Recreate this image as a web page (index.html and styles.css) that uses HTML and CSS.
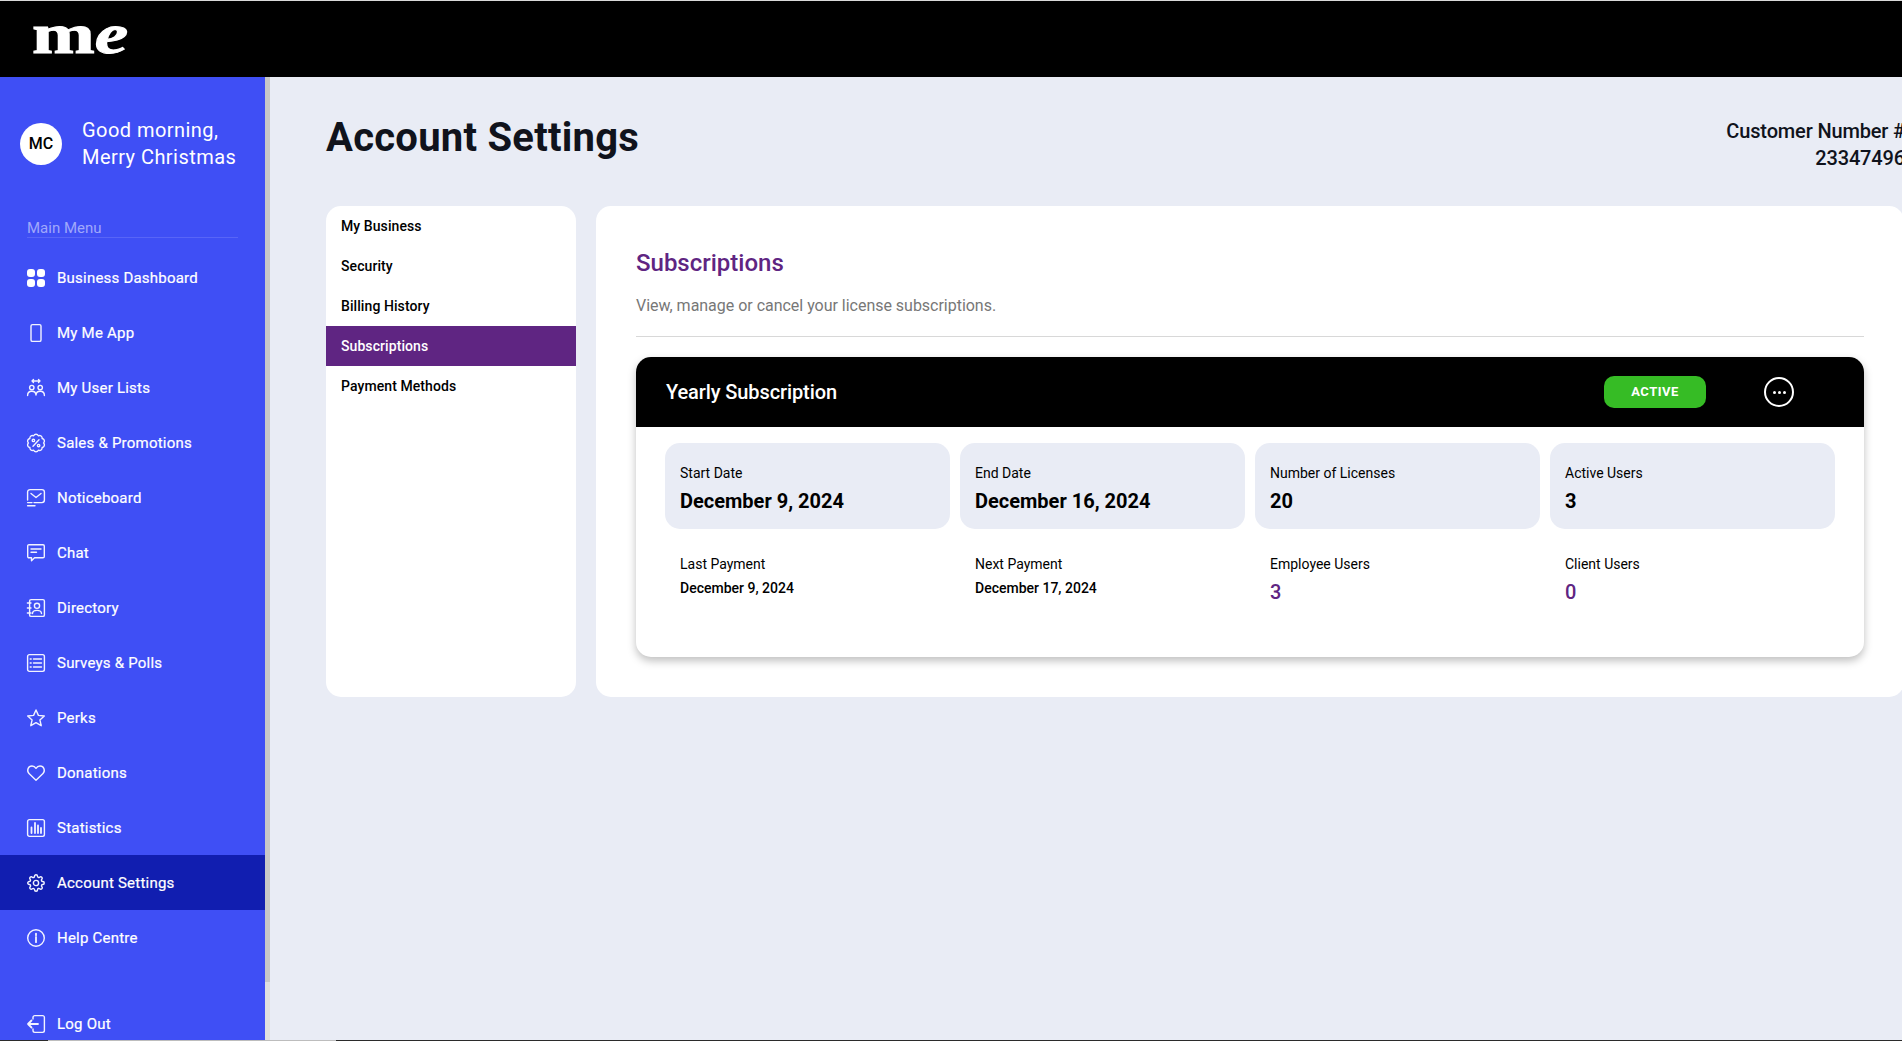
FILE: index.html
```html
<!DOCTYPE html>
<html lang="en">
<head>
  <meta charset="UTF-8" />
  <title>Account Settings</title>
  <link rel="stylesheet" href="styles.css">
</head>
<body>
  <div class="topline"></div>
  <header class="topbar">
    <span class="logo">m<i>e</i></span>
  </header>

  <div class="shell">
    <aside class="sidebar">
      <div class="user">
        <div class="avatar">MC</div>
        <div class="greeting">Good morning,<br>Merry Christmas</div>
      </div>
      <div class="menu-title">Main Menu</div>

      <nav class="menu">
        <a class="menu-item">
          <svg class="icon" viewBox="0 0 18 18"><g class="solid"><rect x="0" y="0" width="8" height="8" rx="3"/><rect x="10" y="0" width="8" height="8" rx="3"/><rect x="0" y="10" width="8" height="8" rx="3"/><rect x="10" y="10" width="8" height="8" rx="3"/></g></svg>
          Business Dashboard
        </a>
        <a class="menu-item">
          <svg class="icon" viewBox="0 0 18 18"><rect x="4" y="0.6" width="10" height="16.8" rx="1.5"/></svg>
          My Me App
        </a>
        <a class="menu-item">
          <svg class="icon" viewBox="0 0 18 18"><path d="M5 2h8M6.500 .5L5 2l1.500 1.500M11.500 .5L13 2l-1.500 1.500"/><circle cx="4.800" cy="8.600" r="2.200"/><circle cx="13.200" cy="8.600" r="2.200"/><path d="M.6 16.500c0-5.500 8-5.500 8.400-.5M9 16c.4-5 8.400-5 8.400 .5"/></svg>
          My User Lists
        </a>
        <a class="menu-item">
          <svg class="icon" viewBox="0 0 18 18"><path d="M16.600 9A2.600 2.600 0 0 1 15.150 13.470A2.600 2.600 0 0 1 11.350 16.230A2.600 2.600 0 0 1 6.650 16.230A2.600 2.600 0 0 1 2.850 13.470A2.600 2.600 0 0 1 1.400 9A2.600 2.600 0 0 1 2.850 4.530A2.600 2.600 0 0 1 6.650 1.770A2.600 2.600 0 0 1 11.350 1.770A2.600 2.600 0 0 1 15.150 4.530A2.600 2.600 0 0 1 16.600 9Z"/><path d="M6 12.200L12 5.800"/><circle cx="6.400" cy="6.400" r="1.200"/><circle cx="11.600" cy="11.600" r="1.200"/></svg>
          Sales &amp; Promotions
        </a>
        <a class="menu-item">
          <svg class="icon" viewBox="0 0 18 18"><path d="M.6 11V3.100A2.500 2.500 0 0 1 3.100 .6h11.800a2.500 2.500 0 0 1 2.500 2.500v8a2.500 2.500 0 0 1-2.500 2.500H7"/><path d="M4 4.500l5 4 5-4"/><path d="M.6 13.600h4.400M.6 16.800h7.400"/></svg>
          Noticeboard
        </a>
        <a class="menu-item">
          <svg class="icon" viewBox="0 0 18 18"><path d="M2 .7h14a1.300 1.300 0 0 1 1.300 1.300v10.500a1.300 1.300 0 0 1-1.300 1.300H7.500l-3 3v-3H2a1.300 1.300 0 0 1-1.300-1.300V2A1.300 1.300 0 0 1 2 .7z"/><path d="M4 5h10M4 8.200h5.500"/></svg>
          Chat
        </a>
        <a class="menu-item">
          <svg class="icon" viewBox="0 0 18 18"><rect x="2.600" y=".6" width="14.800" height="16.800" rx="1.500"/><circle cx="10" cy="6.800" r="2.600"/><path d="M5.500 14.500c0-4.200 9-4.200 9 0M.4 4h3.600M.4 9h3.600M.4 14h3.600"/></svg>
          Directory
        </a>
        <a class="menu-item">
          <svg class="icon" viewBox="0 0 18 18"><rect x=".6" y=".6" width="16.800" height="16.800" rx="1.800"/><path d="M6.500 5h8M6.500 9h8M6.500 13h8M3.200 5h1M3.200 9h1M3.200 13h1"/></svg>
          Surveys &amp; Polls
        </a>
        <a class="menu-item">
          <svg class="icon" viewBox="0 0 18 18"><path d="M9 1l2.400 5.400 5.900.6-4.400 3.900 1.300 5.800L9 13.700l-5.200 3 1.300-5.800L.7 7l5.900-.6z"/></svg>
          Perks
        </a>
        <a class="menu-item">
          <svg class="icon" viewBox="0 0 18 18"><path d="M9 16.300L2 9.500C-.5 7 .9 2 5 2c2 0 3.200 1 4 2.300C9.800 3 11 2 13 2c4.100 0 5.500 5 3 7.500z"/></svg>
          Donations
        </a>
        <a class="menu-item">
          <svg class="icon" viewBox="0 0 18 18"><rect x=".6" y=".6" width="16.800" height="16.800" rx="1.800"/><path class="thick" d="M4.500 14V8.500M8 14V4M11 14V6.500M14 14V9"/></svg>
          Statistics
        </a>
        <a class="menu-item active">
          <svg class="icon" viewBox="0 0 24 24"><circle class="gear" cx="12" cy="12" r="3.500"/><path class="gear" d="M19.400 15a1.650 1.650 0 0 0 .33 1.820l.06.06a2 2 0 0 1 0 2.830 2 2 0 0 1-2.830 0l-.06-.06a1.650 1.650 0 0 0-1.820-.33 1.650 1.650 0 0 0-1 1.510V21a2 2 0 0 1-2 2 2 2 0 0 1-2-2v-.09A1.650 1.650 0 0 0 9 19.400a1.650 1.650 0 0 0-1.820.33l-.06.06a2 2 0 0 1-2.830 0 2 2 0 0 1 0-2.830l.06-.06a1.650 1.650 0 0 0 .33-1.820 1.650 1.650 0 0 0-1.510-1H3a2 2 0 0 1-2-2 2 2 0 0 1 2-2h.09A1.650 1.650 0 0 0 4.600 9a1.650 1.650 0 0 0-.33-1.820l-.06-.06a2 2 0 0 1 0-2.830 2 2 0 0 1 2.830 0l.06.06a1.650 1.650 0 0 0 1.820.33H9a1.650 1.650 0 0 0 1-1.510V3a2 2 0 0 1 2-2 2 2 0 0 1 2 2v.09a1.650 1.650 0 0 0 1 1.510 1.650 1.650 0 0 0 1.820-.33l.06-.06a2 2 0 0 1 2.830 0 2 2 0 0 1 0 2.830l-.06.06a1.650 1.650 0 0 0-.33 1.820V9a1.650 1.650 0 0 0 1.510 1H21a2 2 0 0 1 2 2 2 2 0 0 1-2 2h-.09a1.650 1.650 0 0 0-1.510 1z"/></svg>
          Account Settings
        </a>
        <a class="menu-item">
          <svg class="icon" viewBox="0 0 18 18"><circle cx="9" cy="9" r="8.300"/><path class="thick" d="M9 8v5.200M9 4.600v1.600"/></svg>
          Help Centre
        </a>
        <a class="menu-item logout">
          <svg class="icon" viewBox="0 0 18 18"><path d="M6 4V2.400A1.800 1.800 0 0 1 7.800 .6h7.800a1.800 1.800 0 0 1 1.800 1.800v13.200a1.800 1.800 0 0 1-1.800 1.800H7.800A1.800 1.800 0 0 1 6 15.600V14"/><path class="thick" d="M11 9H1M4.500 5.500L1 9l3.500 3.500"/></svg>
          Log Out
        </a>
      </nav>
    </aside>

    <div class="rail"><div class="rail-thumb"></div></div>

    <main class="main">
      <div class="content">
        <div class="page-head">
          <h1>Account Settings</h1>
          <div class="customer">Customer Number #<br>23347496</div>
        </div>

        <div class="columns">
          <ul class="tabs">
            <li>My Business</li>
            <li>Security</li>
            <li>Billing History</li>
            <li class="current">Subscriptions</li>
            <li>Payment Methods</li>
          </ul>

          <section class="panel">
            <h2>Subscriptions</h2>
            <p class="lead">View, manage or cancel your license subscriptions.</p>

            <div class="sub-card">
              <div class="sub-head">
                <span class="sub-name">Yearly Subscription</span>
                <span class="badge">ACTIVE</span>
                <span class="more"><i></i><i></i><i></i></span>
              </div>
              <div class="sub-body">
                <div class="stats">
                  <div class="stat"><label>Start Date</label><strong>December 9, 2024</strong></div>
                  <div class="stat"><label>End Date</label><strong>December 16, 2024</strong></div>
                  <div class="stat"><label>Number of Licenses</label><strong>20</strong></div>
                  <div class="stat"><label>Active Users</label><strong>3</strong></div>
                </div>
                <div class="stats lower">
                  <div class="stat"><label>Last Payment</label><b>December 9, 2024</b></div>
                  <div class="stat"><label>Next Payment</label><b>December 17, 2024</b></div>
                  <div class="stat"><label>Employee Users</label><em>3</em></div>
                  <div class="stat"><label>Client Users</label><em>0</em></div>
                </div>
              </div>
            </div>
          </section>
        </div>
      </div>
    </main>
  </div>

  <div class="bottomline"><span></span></div>
</body>
</html>
```

FILE: styles.css
```css
* {
  box-sizing: border-box;
}
body {
  margin: 0;
  height: 1041px;
  overflow: hidden;
  display: flex;
  flex-direction: column;
  background: #e9ecf5;
  font-family: Roboto, "Liberation Sans", sans-serif;
  color: #000;
}
.topline {
  height: 1px;
  background: #d9d9d9;
}
.topbar {
  height: 76px;
  background: #000;
  padding-left: 32px;
  flex: none;
}
.logo {
  display: inline-block;
  font-family: "Liberation Serif", serif;
  font-weight: 700;
  font-size: 58px;
  line-height: 66px;
  color: #fff;
  -webkit-text-stroke: 1px #fff;
  transform: scaleX(1.3);
  transform-origin: left center;
}
.shell {
  flex: 1;
  display: flex;
  min-height: 0;
}
.bottomline {
  height: 1px;
  flex: none;
  background: #2b2b2b;
  padding-left: 48px;
}
.bottomline span {
  display: block;
  width: 288px;
  height: 1px;
  background: #bdbdbd;
}

/* sidebar */
.sidebar {
  width: 265px;
  flex: none;
  background: #3f4ff5;
  color: #fff;
  overflow: hidden;
}
.user {
  display: flex;
  align-items: center;
  gap: 20px;
  padding: 40px 0 0 20px;
}
.avatar {
  width: 42px;
  height: 42px;
  border-radius: 50%;
  background: #fff;
  color: #000;
  font-size: 16px;
  font-weight: 500;
  line-height: 42px;
  text-align: center;
}
.greeting {
  font-size: 20px;
  line-height: 27px;
  letter-spacing: .45px;
}
.menu-title {
  margin: 48px 27px 0;
  border-bottom: 1px solid #5865f7;
  font-size: 15px;
  line-height: 18px;
  color: #a0a8fb;
}
.menu {
  margin-top: 12px;
}
.menu-item {
  height: 55px;
  display: flex;
  align-items: center;
  gap: 12px;
  padding: 1px 0 0 27px;
  font-size: 15px;
  font-weight: 400;
  letter-spacing: .22px;
  -webkit-text-stroke: .2px #fff;
}
.menu-item.active {
  background: #111eb0;
}
.menu-item.logout {
  margin-top: 31px;
}
.icon {
  width: 18px;
  height: 18px;
  flex: none;
  fill: none;
  stroke: #f2f3ff;
  stroke-width: 1.4;
  stroke-linecap: round;
  stroke-linejoin: round;
  overflow: visible;
}
.icon .solid {
  fill: #fff;
  stroke: none;
}
.icon .thick {
  stroke-width: 1.8;
}
.icon .gear {
  stroke-width: 1.9;
}
.rail {
  width: 5px;
  flex: none;
  background: #e0e0e0;
}
.rail-thumb {
  height: 905px;
  background: #c8c8c8;
}

/* main */
.main {
  flex: 1;
  min-width: 0;
  overflow: hidden;
  padding-left: 56px;
}
.content {
  width: 1578px;
}
.page-head {
  height: 129px;
  display: flex;
  justify-content: space-between;
}
h1 {
  margin: 34px 0 0;
  font-size: 40px;
  line-height: 54px;
  font-weight: 700;
  letter-spacing: .25px;
  color: #10131c;
}
.customer {
  padding-top: 41px;
  margin-right: -1px;
  text-align: right;
  font-size: 20px;
  line-height: 27px;
  font-weight: 500;
  letter-spacing: -.15px;
  color: #10131c;
}
.columns {
  display: grid;
  grid-template-columns: 250px 1fr;
  gap: 20px;
  height: 491px;
}
.tabs {
  margin: 0;
  padding: 0;
  list-style: none;
  background: #fff;
  border-radius: 15px;
  overflow: hidden;
}
.tabs li {
  height: 40px;
  line-height: 40px;
  padding-left: 15px;
  font-size: 14px;
  font-weight: 500;
  letter-spacing: .08px;
}
.tabs li.current {
  background: #5f2582;
  color: #fff;
}
.panel {
  background: #fff;
  border-radius: 15px;
  padding: 43px 40px 0;
}
h2 {
  margin: 0;
  font-size: 24px;
  line-height: 28px;
  font-weight: 500;
  color: #5f2582;
}
.lead {
  margin: 18px 0 0;
  padding-bottom: 19px;
  border-bottom: 1px solid #d8d8d8;
  font-size: 16px;
  line-height: 22px;
  letter-spacing: -.02px;
  color: #777;
}
.sub-card {
  margin-top: 20px;
  height: 300px;
  border-radius: 15px;
  background: #fff;
  box-shadow: 0 4px 8px rgba(0, 0, 0, .25);
}
.sub-head {
  height: 70px;
  display: flex;
  align-items: center;
  padding-left: 30px;
  background: #000;
  border-radius: 15px 15px 0 0;
  color: #fff;
}
.sub-name {
  flex: 1;
  font-size: 20px;
  font-weight: 500;
  letter-spacing: -.1px;
}
.badge {
  width: 102px;
  height: 32px;
  border-radius: 10px;
  background: #36bc25;
  font-size: 13px;
  font-weight: 700;
  line-height: 32px;
  letter-spacing: .5px;
  text-align: center;
}
.more {
  width: 30px;
  height: 30px;
  margin: 0 70px 0 58px;
  border: 2px solid #fff;
  border-radius: 50%;
  display: flex;
  align-items: center;
  justify-content: center;
  gap: 2px;
}
.more i {
  width: 3px;
  height: 3px;
  border-radius: 50%;
  background: #fff;
}
.sub-body {
  padding: 16px 29px 0;
}
.stats {
  display: grid;
  grid-template-columns: repeat(4, 1fr);
  gap: 10px;
}
.stat {
  height: 86px;
  padding: 20px 15px 0;
  background: #e9ecf5;
  border-radius: 15px;
}
.stat label {
  display: block;
  font-size: 14px;
  line-height: 20px;
}
.stat strong {
  display: block;
  margin-top: 6px;
  font-size: 20px;
  line-height: 24px;
  font-weight: 700;
}
.stats.lower {
  margin-top: 5px;
}
.lower .stat {
  background: none;
}
.stat b {
  display: block;
  margin-top: 4px;
  font-size: 14px;
  line-height: 20px;
  font-weight: 500;
}
.stat em {
  display: block;
  margin-top: 6px;
  font-size: 20px;
  line-height: 24px;
  font-style: normal;
  font-weight: 500;
  color: #5f2582;
}
```
